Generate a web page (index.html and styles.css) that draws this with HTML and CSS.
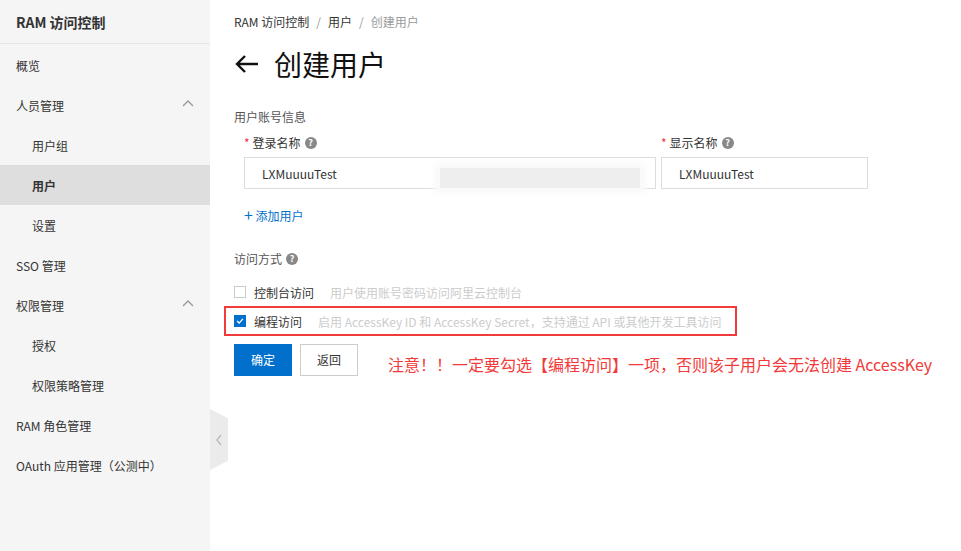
FILE: index.html
```html
<!DOCTYPE html>
<html>

<head>
    <title>创建用户 - RAM 访问控制</title>
    <link rel="stylesheet" href="styles.css">
</head>

<body>
    <div class="page">
        <div class="sidebar">
            <div class="side-title">RAM 访问控制</div>
            <div class="nav">
                <div class="nav-item">概览</div>
                <div class="nav-item">人员管理
                    <svg class="caret" width="12" height="8" viewBox="0 0 12 8"><path d="M1 7 L6 2 L11 7" fill="none" stroke="#999" stroke-width="1.3"/></svg>
                </div>
                <div class="nav-item sub">用户组</div>
                <div class="nav-item sub active">用户</div>
                <div class="nav-item sub">设置</div>
                <div class="nav-item">SSO 管理</div>
                <div class="nav-item">权限管理
                    <svg class="caret" width="12" height="8" viewBox="0 0 12 8"><path d="M1 7 L6 2 L11 7" fill="none" stroke="#999" stroke-width="1.3"/></svg>
                </div>
                <div class="nav-item sub">授权</div>
                <div class="nav-item sub">权限策略管理</div>
                <div class="nav-item">RAM 角色管理</div>
                <div class="nav-item">OAuth 应用管理（公测中）</div>
            </div>
            <div class="collapse-tab">
                <svg width="8" height="12" viewBox="0 0 8 12"><path d="M6 1 L2 6 L6 11" fill="none" stroke="#bbb" stroke-width="1.3"/></svg>
            </div>
        </div>

        <div class="main">
            <div class="breadcrumb">
                <span>RAM 访问控制</span><span class="sep">/</span><span>用户</span><span class="sep">/</span><span class="current">创建用户</span>
            </div>
            <div class="title">
                <svg width="26" height="20" viewBox="0 0 26 20"><path d="M24 10 H3 M11 2 L3 10 L11 18" fill="none" stroke="#111" stroke-width="2.4"/></svg>
                <span>创建用户</span>
            </div>

            <div class="section-label">用户账号信息</div>
            <div class="fields">
                <div class="field wide">
                    <div class="label"><span class="star">*</span>登录名称 <span class="help">?</span></div>
                    <div class="input-wrap">
                        <div class="input">LXMuuuuTest</div>
                        <div class="blur"></div>
                    </div>
                </div>
                <div class="field">
                    <div class="label"><span class="star">*</span>显示名称 <span class="help">?</span></div>
                    <div class="input small">LXMuuuuTest</div>
                </div>
            </div>
            <div class="add-user"><span class="plus">+</span> 添加用户</div>

            <div class="access-label">访问方式 <span class="help">?</span></div>
            <div class="check-row">
                <span class="checkbox"></span>
                <span class="check-text">控制台访问</span>
                <span class="hint">用户使用账号密码访问阿里云控制台</span>
            </div>
            <div class="check-row marked">
                <span class="checkbox checked">
                    <svg width="12" height="12" viewBox="0 0 12 12"><path d="M2.5 6 L5 8.5 L9.5 3.5" fill="none" stroke="#fff" stroke-width="1.6"/></svg>
                </span>
                <span class="check-text">编程访问</span>
                <span class="hint">启用 AccessKey ID 和 AccessKey Secret，支持通过 API 或其他开发工具访问</span>
            </div>

            <div class="actions">
                <button class="btn primary">确定</button>
                <button class="btn">返回</button>
                <span class="note">注意！！一定要勾选【编程访问】一项，否则该子用户会无法创建 AccessKey</span>
            </div>
        </div>
    </div>
</body>

</html>
```

FILE: styles.css
```css
body {
    margin: 0;
    font-family: "Noto Sans CJK SC", "Open Sans", sans-serif;
    font-size: 12px;
    color: #333;
    background: #fff;
}

.page {
    display: flex;
    width: 961px;
    height: 551px;
    overflow: hidden;
}

.sidebar {
    position: relative;
    width: 210px;
    flex-shrink: 0;
    background: #f5f5f5;
}

.side-title {
    height: 44px;
    line-height: 44px;
    padding-left: 16px;
    font-size: 14px;
    font-weight: bold;
    color: #333;
    border-bottom: 1px solid #e6e6e6;
    box-sizing: border-box;
}

.nav {
    padding-top: 1px;
}

.nav-item {
    display: flex;
    align-items: center;
    justify-content: space-between;
    height: 40px;
    padding: 0 16px;
    color: #333;
}

.nav-item.sub {
    padding-left: 32px;
}

.nav-item.active {
    background: #dedede;
    font-weight: bold;
}

.caret {
    margin-top: -4px;
}

.collapse-tab {
    position: absolute;
    left: 210px;
    top: 409px;
    width: 18px;
    height: 61px;
    background: #ebebeb;
    clip-path: polygon(0 0, 100% 15%, 100% 85%, 0 100%);
    display: flex;
    align-items: center;
    justify-content: center;
}

.main {
    flex: 1;
    padding: 0 24px;
}

.breadcrumb {
    padding-top: 13px;
    height: 18px;
    line-height: 18px;
    color: #333;
}

.breadcrumb .sep {
    margin: 0 7px;
    color: #999;
}

.breadcrumb .current {
    color: #999;
}

.title {
    display: flex;
    align-items: center;
    gap: 14px;
    margin-top: 13px;
    height: 40px;
    font-size: 28px;
    color: #111;
}

.section-label {
    margin-top: 24px;
    color: #555;
    line-height: 18px;
}

.fields {
    display: flex;
    gap: 5px;
    margin-top: 8px;
    padding-left: 10px;
}

.label {
    line-height: 18px;
    color: #333;
    display: flex;
    align-items: center;
}

.star {
    color: #e34;
    margin-right: 3px;
}

.help {
    display: inline-flex;
    align-items: center;
    justify-content: center;
    width: 12px;
    height: 12px;
    border-radius: 50%;
    background: #888;
    color: #fff;
    font-size: 9px;
    font-weight: bold;
    margin-left: 4px;
}

.input-wrap {
    position: relative;
}

.input {
    margin-top: 5px;
    width: 412px;
    height: 32px;
    line-height: 32px;
    padding-left: 17px;
    border: 1px solid #dcdcdc;
    box-sizing: border-box;
    color: #333;
}

.input.small {
    width: 207px;
}

.blur {
    position: absolute;
    left: 196px;
    top: 11px;
    width: 200px;
    height: 20px;
    background: #eeeeee;
    box-shadow: 0 0 6px 6px #fafafa;
}

.add-user {
    margin-top: 16px;
    padding-left: 10px;
    color: #0070cc;
    line-height: 18px;
}

.plus {
    font-size: 16px;
}

.access-label {
    margin-top: 25px;
    line-height: 18px;
    color: #555;
    display: flex;
    align-items: center;
}

.check-row {
    display: flex;
    align-items: center;
    height: 28px;
    margin-top: 10px;
}

.check-row.marked {
    margin-left: -10px;
    padding-left: 10px;
    width: 513px;
    border: 2px solid #f23a3a;
    box-sizing: border-box;
    height: 30px;
    margin-top: 0;
}

.check-row.marked .checkbox {
    margin-left: -2px;
}

.checkbox {
    width: 12px;
    height: 12px;
    border: 1px solid #ccc;
    box-sizing: border-box;
    background: #fff;
    display: inline-flex;
    align-items: center;
    justify-content: center;
}

.checkbox.checked {
    background: #0070cc;
    border-color: #0070cc;
}

.check-text {
    margin-left: 8px;
    color: #333;
}

.hint {
    margin-left: 16px;
    color: #ccc;
}

.actions {
    display: flex;
    align-items: center;
    gap: 8px;
    margin-top: 7px;
}

.btn {
    height: 32px;
    width: 58px;
    border: 1px solid #ccc;
    background: #fff;
    font-family: inherit;
    font-size: 12px;
    color: #333;
    padding: 0;
}

.btn.primary {
    background: #0070cc;
    border-color: #0070cc;
    color: #fff;
}

.note {
    margin-left: 22px;
    margin-top: 9px;
    font-size: 16px;
    color: #f23a3a;
}
```
